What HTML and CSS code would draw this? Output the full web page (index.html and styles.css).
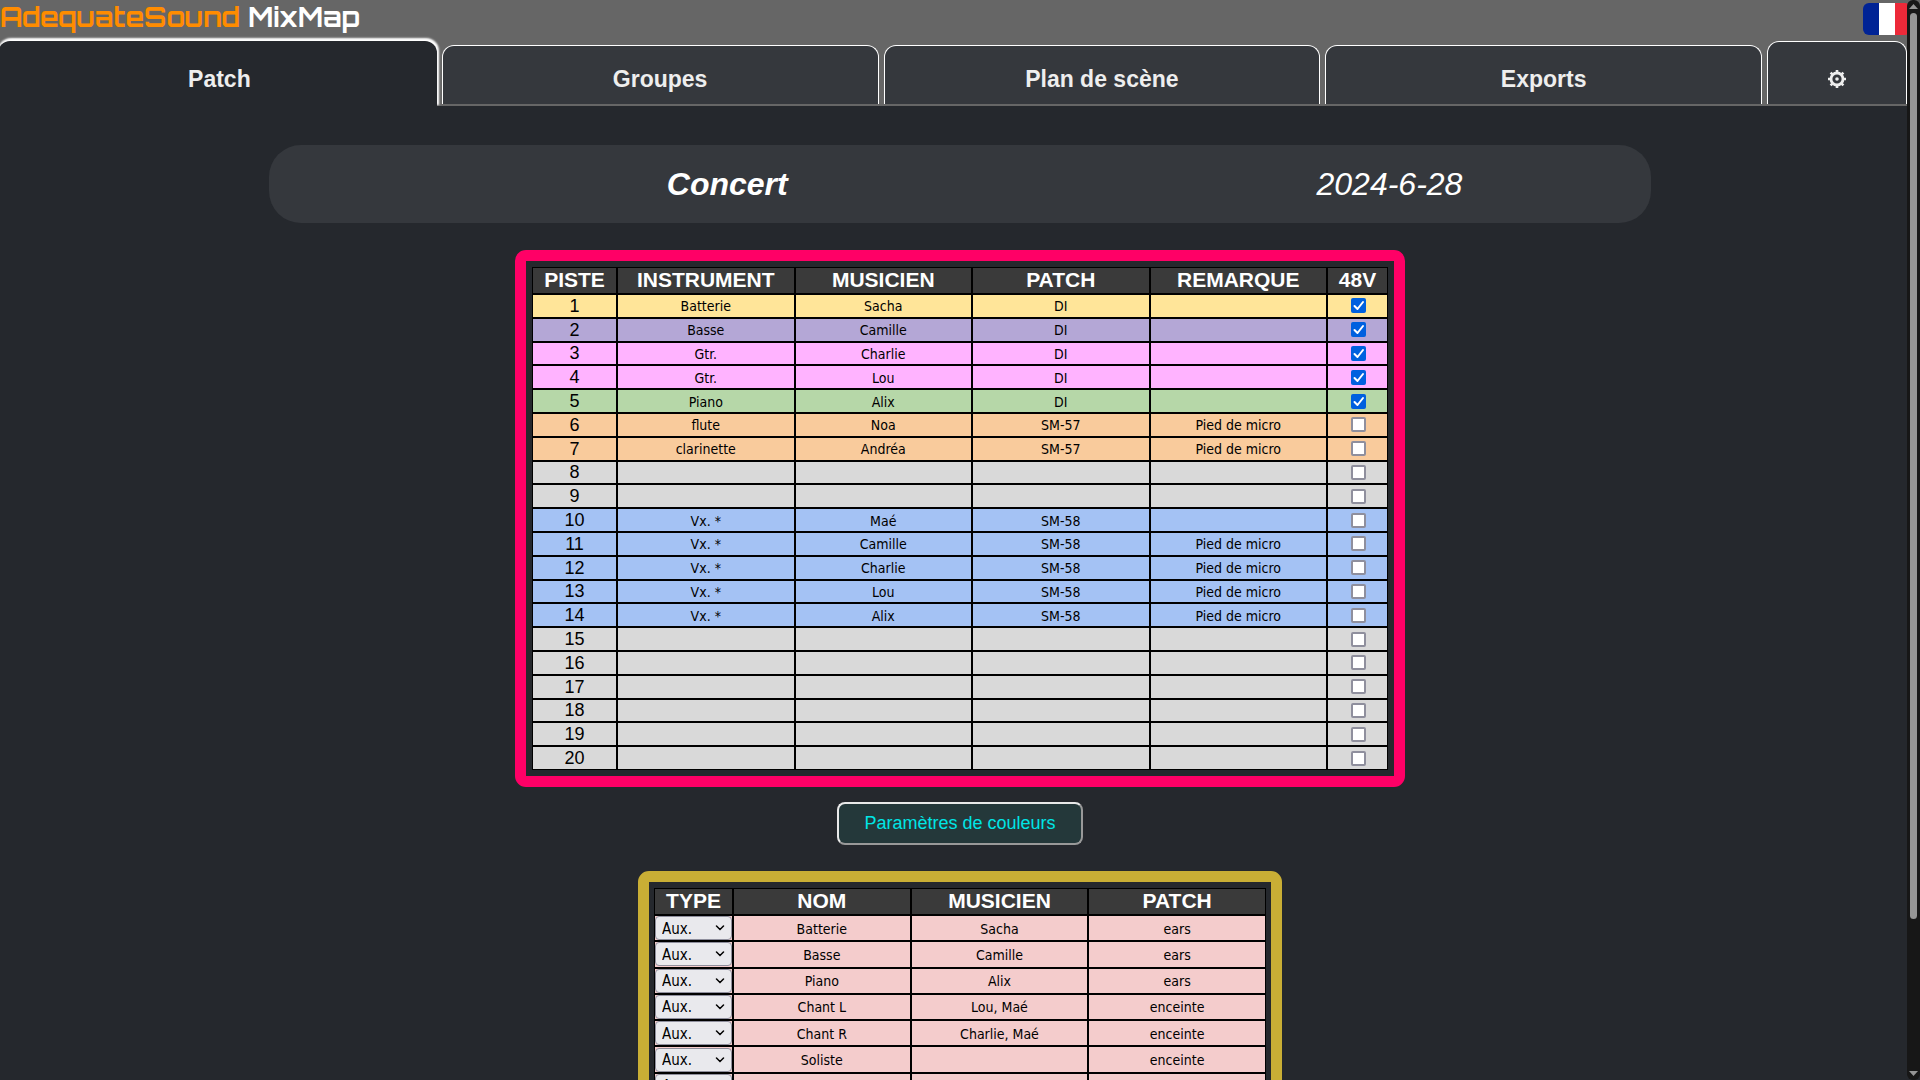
FILE: index.html
```html
<!DOCTYPE html>
<html lang="fr">
<head>
<meta charset="utf-8">
<title>AdequateSound MixMap</title>
<link rel="stylesheet" href="styles.css">
</head>
<body>
<header class="top">
  <div class="brand-row">
    <h1 class="brand"><span class="brand-accent">AdequateSound</span> MixMap</h1>
    <button class="lang" type="button" aria-label="Français">
      <svg viewBox="0 0 48 32" width="48" height="32"><path fill="#002395" d="M0 0h16v32H0z"/><path fill="#fff" d="M16 0h16v32H16z"/><path fill="#ed2939" d="M32 0h16v32H32z"/></svg>
    </button>
  </div>
  <nav class="tabs">
    <button class="tab tab-active" type="button">Patch</button>
    <button class="tab" type="button">Groupes</button>
    <button class="tab" type="button">Plan de scène</button>
    <button class="tab" type="button">Exports</button>
    <button class="tab tab-settings" type="button" aria-label="Réglages">
      <svg class="gear" viewBox="0 0 20 20" width="20" height="20" fill="none" stroke="#eee"><circle cx="10" cy="10" r="6" stroke-width="2.8"/><path stroke-width="2.6" d="M10 1v2.500M10 16.500V19M1 10h2.500M16.500 10H19M3.600 3.600l1.800 1.800M14.600 14.600l1.800 1.800M3.600 16.400l1.800-1.800M14.600 5.400l1.800-1.800"/><circle cx="10" cy="10" r="1.800" fill="#eee" stroke="none"/></svg>
    </button>
  </nav>
</header>

<main class="content">
  <section class="event">
    <h2 class="event-name">Concert</h2>
    <p class="event-date">2024-6-28</p>
  </section>

  <section class="frame frame-inputs">
    <table class="sheet inputs">
      <colgroup><col class="col-track"><col><col><col><col><col class="col-phantom"></colgroup>
      <thead><tr><th>PISTE</th><th>INSTRUMENT</th><th>MUSICIEN</th><th>PATCH</th><th>REMARQUE</th><th>48V</th></tr></thead>
      <tbody>
        <tr class="yellow"><td>1</td><td>Batterie</td><td>Sacha</td><td>DI</td><td></td><td><input type="checkbox" aria-label="48V piste 1" checked></td></tr>
        <tr class="purple"><td>2</td><td>Basse</td><td>Camille</td><td>DI</td><td></td><td><input type="checkbox" aria-label="48V piste 2" checked></td></tr>
        <tr class="pink"><td>3</td><td>Gtr.</td><td>Charlie</td><td>DI</td><td></td><td><input type="checkbox" aria-label="48V piste 3" checked></td></tr>
        <tr class="pink"><td>4</td><td>Gtr.</td><td>Lou</td><td>DI</td><td></td><td><input type="checkbox" aria-label="48V piste 4" checked></td></tr>
        <tr class="green"><td>5</td><td>Piano</td><td>Alix</td><td>DI</td><td></td><td><input type="checkbox" aria-label="48V piste 5" checked></td></tr>
        <tr class="orange"><td>6</td><td>flute</td><td>Noa</td><td>SM-57</td><td>Pied de micro</td><td><input type="checkbox" aria-label="48V piste 6"></td></tr>
        <tr class="orange"><td>7</td><td>clarinette</td><td>Andréa</td><td>SM-57</td><td>Pied de micro</td><td><input type="checkbox" aria-label="48V piste 7"></td></tr>
        <tr><td>8</td><td></td><td></td><td></td><td></td><td><input type="checkbox" aria-label="48V piste 8"></td></tr>
        <tr><td>9</td><td></td><td></td><td></td><td></td><td><input type="checkbox" aria-label="48V piste 9"></td></tr>
        <tr class="blue"><td>10</td><td>Vx. *</td><td>Maé</td><td>SM-58</td><td></td><td><input type="checkbox" aria-label="48V piste 10"></td></tr>
        <tr class="blue"><td>11</td><td>Vx. *</td><td>Camille</td><td>SM-58</td><td>Pied de micro</td><td><input type="checkbox" aria-label="48V piste 11"></td></tr>
        <tr class="blue"><td>12</td><td>Vx. *</td><td>Charlie</td><td>SM-58</td><td>Pied de micro</td><td><input type="checkbox" aria-label="48V piste 12"></td></tr>
        <tr class="blue"><td>13</td><td>Vx. *</td><td>Lou</td><td>SM-58</td><td>Pied de micro</td><td><input type="checkbox" aria-label="48V piste 13"></td></tr>
        <tr class="blue"><td>14</td><td>Vx. *</td><td>Alix</td><td>SM-58</td><td>Pied de micro</td><td><input type="checkbox" aria-label="48V piste 14"></td></tr>
        <tr><td>15</td><td></td><td></td><td></td><td></td><td><input type="checkbox" aria-label="48V piste 15"></td></tr>
        <tr><td>16</td><td></td><td></td><td></td><td></td><td><input type="checkbox" aria-label="48V piste 16"></td></tr>
        <tr><td>17</td><td></td><td></td><td></td><td></td><td><input type="checkbox" aria-label="48V piste 17"></td></tr>
        <tr><td>18</td><td></td><td></td><td></td><td></td><td><input type="checkbox" aria-label="48V piste 18"></td></tr>
        <tr><td>19</td><td></td><td></td><td></td><td></td><td><input type="checkbox" aria-label="48V piste 19"></td></tr>
        <tr><td>20</td><td></td><td></td><td></td><td></td><td><input type="checkbox" aria-label="48V piste 20"></td></tr>
      </tbody>
    </table>
  </section>

  <button class="color-settings" type="button">Paramètres de couleurs</button>

  <section class="frame frame-outputs">
    <table class="sheet outputs">
      <colgroup><col class="col-type"><col><col><col></colgroup>
      <thead><tr><th>TYPE</th><th>NOM</th><th>MUSICIEN</th><th>PATCH</th></tr></thead>
      <tbody>
        <tr><td><select aria-label="Type sortie 1"><option>Aux.</option></select></td><td>Batterie</td><td>Sacha</td><td>ears</td></tr>
        <tr><td><select aria-label="Type sortie 2"><option>Aux.</option></select></td><td>Basse</td><td>Camille</td><td>ears</td></tr>
        <tr><td><select aria-label="Type sortie 3"><option>Aux.</option></select></td><td>Piano</td><td>Alix</td><td>ears</td></tr>
        <tr><td><select aria-label="Type sortie 4"><option>Aux.</option></select></td><td>Chant L</td><td>Lou, Maé</td><td>enceinte</td></tr>
        <tr><td><select aria-label="Type sortie 5"><option>Aux.</option></select></td><td>Chant R</td><td>Charlie, Maé</td><td>enceinte</td></tr>
        <tr><td><select aria-label="Type sortie 6"><option>Aux.</option></select></td><td>Soliste</td><td></td><td>enceinte</td></tr>
        <tr><td><select aria-label="Type sortie 7"><option>Aux.</option></select></td><td></td><td></td><td></td></tr>
      </tbody>
    </table>
  </section>
</main>

<div class="scrollbar" aria-hidden="true">
  <svg viewBox="0 0 9 5" width="9" height="5"><path fill="#959595" d="M4.500 0 9 5H0z"/></svg>
  <div class="scroll-track"><div class="scroll-thumb"></div></div>
  <svg viewBox="0 0 9 5" width="9" height="5"><path fill="#959595" d="M0 0h9L4.500 5z"/></svg>
</div>
</body>
</html>
```
FILE: styles.css
```css
* {
  box-sizing: border-box;
}

body {
  margin: 0;
  height: 100vh;
  overflow: hidden;
  background: #25282d;
  color: #fff;
  font-family: "Liberation Sans", Arial, sans-serif;
}

button {
  margin: 0;
  font-family: inherit;
}

/* Header */
.top {
  background: #666;
}

.brand-row {
  display: flex;
  justify-content: space-between;
  align-items: flex-start;
  height: 41px;
  padding: 3px 9px 0 0;
}

.brand {
  margin: 0;
  font: bold 27px/28px Orbitron, "DejaVu Sans", sans-serif;
}

.brand-accent {
  color: #ff8c00;
}

.lang {
  display: block;
  padding: 0;
  border: 0;
  border-radius: 6px;
  overflow: hidden;
  background: none;
}

.lang svg {
  display: block;
}

.tabs {
  display: flex;
  align-items: flex-end;
  gap: 5px;
  margin: 0 13px 0 -2px;
  padding-bottom: 2px;
}

.tab {
  flex: 1;
  height: 59px;
  padding: 8px 0 0;
  border: 1px solid #fff;
  border-bottom: 0;
  border-radius: 12px 12px 0 0;
  background: #35383d;
  color: #eee;
  font-size: 23px;
  font-weight: bold;
  line-height: 28px;
}

.tab-active {
  height: 65px;
  margin-bottom: -2px;
  padding: 10px 0 0 4px;
  border: 0;
  background: #25282d;
  box-shadow: 1px -2px 2px 1px #fff;
  clip-path: inset(-6px -6px 0 0);
}

.tab-settings {
  flex: 0 0 140px;
  height: 63px;
  padding-top: 12px;
}

.gear {
  display: block;
  margin: 0 auto;
}

/* Content */
.content {
  display: flex;
  flex-direction: column;
  align-items: center;
}

.event {
  display: flex;
  align-items: center;
  width: 72%;
  height: 78px;
  margin: 39px 0 27px;
  padding-right: 58px;
  border-radius: 32px;
  background: #35383d;
  font-size: 32px;
  font-style: italic;
  text-align: center;
}

.event-name {
  flex: 9;
  margin: 0;
  font-size: 32px;
}

.event-date {
  flex: 4;
  margin: 0;
}

.frame {
  border: 11px solid;
  border-radius: 11px;
}

.frame-inputs {
  width: 890px;
  padding: 6px;
  border-color: #ff0066;
}

.frame-outputs {
  width: 644px;
  padding: 6px 5px;
  border-color: #c9ae35;
}

.sheet {
  width: 100%;
  table-layout: fixed;
  border-collapse: separate;
  border-spacing: 0;
  border: 0;
  color: #000;
  text-align: center;
}

.sheet th,
.sheet td {
  padding: 0;
  border: 1px solid #000;
}

.sheet th {
  height: 27px;
  padding-bottom: 2px;
  background: #3a3a3a;
  color: #fff;
  font-size: 21px;
  line-height: 23px;
}

.sheet td {
  padding-top: 1px;
  font: 14px/20px Tahoma, "DejaVu Sans Condensed", "Noto Sans", sans-serif;
}

.inputs {
  height: 503px;
}

.inputs td {
  height: 23px;
  background: #d9d9d9;
}

.inputs td:first-child {
  padding: 0;
  font: 18px/20px "Liberation Sans", Arial, sans-serif;
}

.inputs td:last-child {
  padding: 0 0 0 1px;
}

.inputs .yellow td { background: #ffe599; }
.inputs .purple td { background: #b4a7d6; }
.inputs .pink td { background: #ffb3ff; }
.inputs .green td { background: #b6d7a8; }
.inputs .orange td { background: #f9cb9c; }
.inputs .blue td { background: #a4c2f4; }

.outputs {
  height: 211px;
}

.outputs td {
  height: 26px;
  background: #f4cccc;
}

.outputs td:first-child {
  padding: 0;
}

.col-track { width: 85px; }
.col-phantom { width: 61px; }
.col-type { width: 79px; }

input[type="checkbox"] {
  appearance: none;
  display: block;
  width: 15px;
  height: 15px;
  margin: 0 auto;
  border: 2px solid #8f8f9d;
  border-radius: 2px;
  background: #fff;
}

input[type="checkbox"]:checked {
  border: 0;
  background: #0060df url("data:image/svg+xml,%3Csvg xmlns='http://www.w3.org/2000/svg' viewBox='0 0 15 15'%3E%3Cpath d='M3.500 8l3 3 5.500-7' fill='none' stroke='white' stroke-width='2' stroke-linecap='round' stroke-linejoin='round'/%3E%3C/svg%3E") center / 15px no-repeat;
}

select {
  appearance: none;
  display: block;
  width: 100%;
  height: 24px;
  margin: 0;
  padding: 1px 6px 0;
  border: 1px solid #8f8f9d;
  border-radius: 4px;
  background: #e9e9ed url("data:image/svg+xml,%3Csvg xmlns='http://www.w3.org/2000/svg' viewBox='0 0 10 6'%3E%3Cpath d='M1.500 1L5 4.500 8.500 1' fill='none' stroke='black' stroke-width='1.500' stroke-linecap='round'/%3E%3C/svg%3E") right 6px center / 10px 6px no-repeat;
  color: #000;
  font: 15px/20px Tahoma, "DejaVu Sans Condensed", "Noto Sans", sans-serif;
}

.color-settings {
  height: 43px;
  margin: 15px 0 26px;
  padding: 0 25px;
  border: 2px solid;
  border-color: #e9e9e9 #999 #999 #e9e9e9;
  border-radius: 8px;
  background: #24383a;
  color: #00e5e5;
  font-size: 18px;
}

/* Scrollbar */
.scrollbar {
  position: fixed;
  top: 0;
  right: 0;
  bottom: 0;
  display: flex;
  flex-direction: column;
  align-items: center;
  gap: 4px;
  width: 13px;
  padding: 4px 0;
  border-radius: 6px;
  background: #171717;
}

.scroll-track {
  flex: 1;
  width: 7px;
}

.scroll-thumb {
  height: 86%;
  border-radius: 4px;
  background: #959595;
}
```
